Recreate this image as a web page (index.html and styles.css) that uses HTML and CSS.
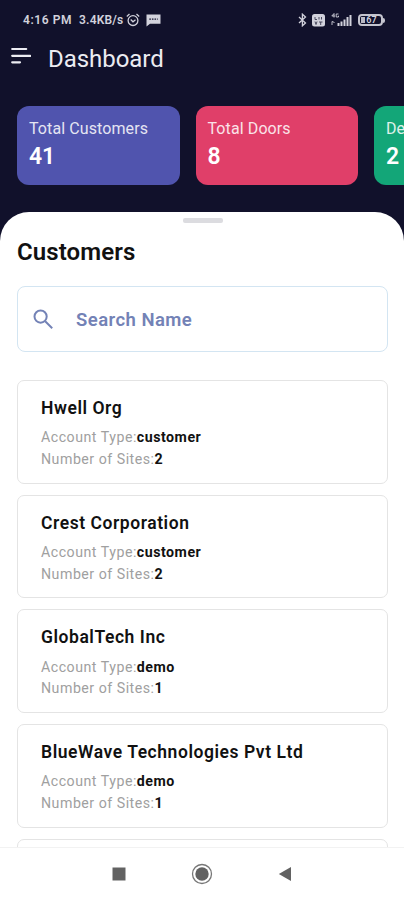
FILE: index.html
```html
<!DOCTYPE html>
<html lang="en">
<head>
<meta charset="utf-8">
<title>Dashboard</title>
<link rel="stylesheet" href="styles.css">
</head>
<body>
<div class="app">
  <div class="status">
    <span class="time">4:16 PM</span>
    <span class="speed">3.4KB/s</span>
    <svg class="alarm" width="14" height="14" viewBox="0 0 14 14" fill="none" stroke="currentColor" stroke-width="1.3"><circle cx="7" cy="7.6" r="4.9"/><path d="M.8 3.4 3.5 1M13.2 3.4 10.5 1M4.7 6.5 7 8.8l2.5-2"/></svg>
    <svg class="chat" width="15" height="13" viewBox="0 0 15 13"><path fill="currentColor" d="M.5.5h14v9.2H4L.5 12.500z"/><path stroke="#11112b" stroke-width="1.2" stroke-dasharray="1.6 1" d="M3.300 5.200h8.500"/></svg>
    <span class="spacer"></span>
    <svg class="bt" width="9" height="14" viewBox="0 0 9 14" fill="none" stroke="currentColor" stroke-width="1.3"><path d="M1 4l6.500 6L4.400 12.800V1.200L7.500 4 1 10"/></svg>
    <svg class="volte" width="13" height="13" viewBox="0 0 13 13"><rect width="13" height="12.500" rx="2.500" fill="currentColor"/><path d="M3 3v2.500h2M7 3v2.500M9.500 3v2.500M3 7.500l1 3 1-3M7 8h3.500M8.700 8v3" fill="none" stroke="#3b3b50" stroke-width=".9"/></svg>
    <svg class="signal" width="22" height="14" viewBox="0 0 22 14"><path fill="currentColor" d="M6.500 10h2v3h-2zM9.500 8.500h2V13h-2zM12.500 6.500h2V13h-2zM15.500 4h2v9h-2zM18.500 2h2v11h-2z"/><path d="M3 .5.8 3h3M3 .5v4M7.500 1H5.200v3h2.300V2.700M1 12V8.500l2.500 1" fill="none" stroke="currentColor" stroke-width=".9"/></svg>
    <span class="battery"><span class="level">67</span></span>
    <span class="battery-tip"></span>
  </div>
  <header class="bar">
    <svg width="20" height="18" viewBox="0 0 20 18" fill="none" stroke="#ececf2" stroke-width="2.200" stroke-linecap="round"><path d="M1.200 2h14M1.200 8.800h18M1.200 15.300h7.800"/></svg>
    <h1>Dashboard</h1>
  </header>
  <section class="stats">
    <div class="stat indigo"><span>Total Customers</span><b>41</b></div>
    <div class="stat pink"><span>Total Doors</span><b>8</b></div>
    <div class="stat green"><span>De</span><b>2</b></div>
  </section>
  <main class="sheet">
    <div class="handle"></div>
    <h2>Customers</h2>
    <div class="search">
      <svg width="21" height="21" viewBox="0 0 21 21" fill="none" stroke="#7382b6" stroke-width="2"><circle cx="7.600" cy="7.600" r="6.100"/><path d="M12.200 12.200l7 7"/></svg>
      <span>Search Name</span>
    </div>
    <div class="list">
      <article><h3>Hwell Org</h3><p>Account Type:<b>customer</b></p><p>Number of Sites:<b>2</b></p></article>
      <article><h3>Crest Corporation</h3><p>Account Type:<b>customer</b></p><p>Number of Sites:<b>2</b></p></article>
      <article><h3>GlobalTech Inc</h3><p>Account Type:<b>demo</b></p><p>Number of Sites:<b>1</b></p></article>
      <article><h3>BlueWave Technologies Pvt Ltd</h3><p>Account Type:<b>demo</b></p><p>Number of Sites:<b>1</b></p></article>
      <article></article>
    </div>
  </main>
  <nav class="nav">
    <svg width="14" height="14" viewBox="0 0 14 14"><path fill="#626262" d="M.5.5h13v13H.5z"/></svg>
    <svg width="22" height="22" viewBox="0 0 22 22"><circle cx="11" cy="11" r="9.500" fill="none" stroke="#777" stroke-width="1.300"/><circle cx="11" cy="11" r="6.700" fill="#626262"/></svg>
    <svg width="14" height="16" viewBox="0 0 14 16"><path fill="#626262" d="M.8 8 13 1v14z"/></svg>
  </nav>
</div>
</body>
</html>
```
FILE: styles.css
```css
* { box-sizing: border-box; }
body { margin: 0; font-family: Roboto, "Liberation Sans", sans-serif; }
h1, h2, h3, p { margin: 0; }
.app { width: 404px; height: 900px; overflow: hidden; display: flex; flex-direction: column; background: #11112b; }
.status { height: 40px; flex: none; display: flex; align-items: center; padding: 0 19px 0 23px; color: #d2d2dc; font-size: 12px; font-weight: 600; white-space: nowrap; }
.status svg { flex: none; }
.time { width: 56px; letter-spacing: .6px; }
.speed { width: 47px; letter-spacing: .2px; }
.chat { margin: 1px 0 0 6px; }
.spacer { flex: 1; }
.volte { margin-left: 5px; }
.signal { margin-left: 6px; }
.battery { width: 25px; height: 12px; margin-left: 5px; border: 2px solid #c4c4ce; border-radius: 4px; padding: 0 1px; display: flex; align-items: center; }
.level { width: 100%; height: 6px; background: linear-gradient(90deg, #b9b9c4 20%, #11112b 20%); font-size: 9px; line-height: 7px; text-align: center; padding-left: 2px; }
.battery-tip { width: 2px; height: 5px; background: #c4c4ce; border-radius: 0 2px 2px 0; }
.bar { height: 38px; flex: none; display: flex; align-items: center; padding: 0 0 2px 11px; }
.bar svg { margin-top: -5px; }
.bar h1 { margin: 2px 0 0 17px; font-size: 24px; line-height: 36px; font-weight: 400; color: #ececf2; letter-spacing: -.05px; }
.stats { display: flex; gap: 16px; padding: 28px 0 0 17px; height: 134px; flex: none; }
.stat { width: 162.500px; height: 79px; flex: none; border-radius: 12px; padding: 13px 12px 0; color: #fff; display: flex; flex-direction: column; }
.stat span { font-size: 16px; line-height: 20px; opacity: .85; letter-spacing: .1px; white-space: nowrap; }
.stat b { font-size: 23px; line-height: 28px; margin-top: 4px; font-weight: 600; letter-spacing: -.2px; }
.indigo { background: #5054ae; }
.pink { background: #e03f69; }
.green { background: #13a678; }
.sheet { height: 635px; flex: none; overflow: hidden; background: #fff; border-radius: 29px 29px 0 0; padding: 6px 16px 0 17px; }
.handle { width: 40px; height: 5px; border-radius: 2px; background: #dcdce0; margin: 0 auto; }
.sheet h2 { margin-top: 12px; font-size: 24px; line-height: 34px; font-weight: 600; color: #111; letter-spacing: .1px; }
.search { margin-top: 17px; height: 66px; border: 1.500px solid #d3e5f2; border-radius: 8px; display: flex; align-items: center; padding: 0 15px; color: #7382b6; font-size: 18.500px; font-weight: 600; letter-spacing: .45px; }
.search span { margin: 2px 0 0 22px; }
.list { display: flex; flex-direction: column; gap: 11px; margin-top: 28px; }
.list article { height: 103.700px; flex: none; border: 1.500px solid #e4e4e4; border-radius: 7px; padding: 15px 23px; }
.list h3 { font-size: 17.500px; line-height: 24.400px; font-weight: 600; color: #111; margin-bottom: 7px; letter-spacing: .55px; white-space: nowrap; }
.list p { font-size: 14.200px; line-height: 21.400px; color: #a0a0a0; letter-spacing: .5px; white-space: nowrap; }
.list b { color: #111; font-weight: 700; }
.nav { height: 53px; flex: none; background: #fff; border-top: 1px solid #f2f2f2; display: flex; align-items: center; padding-left: 112px; }
.nav svg:nth-child(2) { margin-left: 65px; }
.nav svg:nth-child(3) { margin-left: 65px; }
```
